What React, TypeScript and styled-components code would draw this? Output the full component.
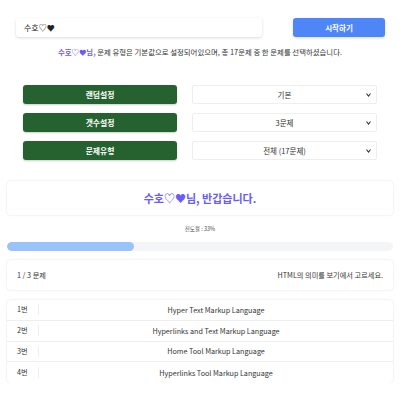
import React from "react";
import styled, { createGlobalStyle } from "styled-components";

const Global = createGlobalStyle`
  html, body { margin: 0; padding: 0; background: #fff; }
  body { font-family: "Noto Sans CJK KR", "Noto Sans", sans-serif; color: #333; }
  * { box-sizing: border-box; }
`;

const Page = styled.div`
  width: 400px;
  padding: 18px 7px 0 7px;
  display: flex;
  flex-direction: column;
`;

const TopBar = styled.div`
  display: flex;
  align-items: center;
  padding: 0 8px 0 9px;
  justify-content: space-between;
`;

const NameInput = styled.div`
  width: 246px;
  height: 19px;
  border-radius: 3px;
  background: #fff;
  box-shadow: 0 1px 3px rgba(0, 0, 0, 0.15);
  font-size: 8px;
  line-height: 19px;
  padding-left: 8px;
  color: #222;
`;

const StartButton = styled.button`
  width: 92px;
  height: 19px;
  border: none;
  border-radius: 3px;
  background: #4e86f7;
  color: #fff;
  font-family: inherit;
  font-size: 7.5px;
  font-weight: 700;
  box-shadow: 0 1px 3px rgba(0, 0, 0, 0.15);
  padding: 0;
`;

const Notice = styled.p`
  margin: 9px 0 0;
  line-height: 11px;
  text-align: center;
  font-size: 7.4px;
  color: #333;
`;

const Highlight = styled.span`
  color: #6a5cf5;
  font-weight: 700;
`;

const Settings = styled.div`
  margin-top: 28px;
  padding: 0 16px;
  display: flex;
  flex-direction: column;
  gap: 9px;
`;

const SettingRow = styled.div`
  display: flex;
  justify-content: space-between;
`;

const SettingLabel = styled.div`
  width: 154px;
  height: 19px;
  border-radius: 3px;
  background: #25622f;
  color: #fff;
  font-size: 7.8px;
  font-weight: 700;
  display: flex;
  align-items: center;
  justify-content: center;
  box-shadow: 0 1px 2px rgba(0, 0, 0, 0.2);
`;

const SelectBox = styled.div`
  width: 185px;
  height: 19px;
  border: 1px solid #eee;
  border-radius: 2px;
  background: #fff;
  font-size: 7.5px;
  display: flex;
  align-items: center;
  justify-content: center;
  position: relative;
  color: #333;
`;

const Chevron = styled.svg`
  position: absolute;
  right: 5px;
  top: 7px;
`;

const Card = styled.div`
  border-radius: 4px;
  background: #fff;
  box-shadow: 0 0 2px rgba(0, 0, 0, 0.15);
`;

const Greeting = styled(Card)`
  margin-top: 21px;
  height: 34px;
  display: flex;
  align-items: center;
  justify-content: center;
  color: #6a5cf5;
  font-size: 11px;
  font-weight: 700;
`;

const ProgressLabel = styled.div`
  margin-top: 10px;
  line-height: 8px;
  text-align: center;
  font-size: 5.5px;
  color: #444;
`;

const Track = styled.div`
  margin-top: 9px;
  height: 9px;
  border-radius: 5px;
  background: #f4f5f6;
  overflow: hidden;
`;

const Fill = styled.div`
  height: 100%;
  border-radius: 5px;
  background: #9ac3fb;
`;

const QuestionCard = styled(Card)`
  margin-top: 9px;
  height: 30px;
  display: flex;
  align-items: center;
  justify-content: space-between;
  padding: 0 10px;
  font-size: 7.2px;
  color: #333;
`;

const OptionList = styled(Card)`
  margin-top: 10px;
  display: flex;
  flex-direction: column;
`;

const OptionRow = styled.div<{ $last?: boolean }>`
  height: 20.75px;
  display: flex;
  align-items: center;
  border-bottom: ${(p) => (p.$last ? "none" : "1px solid #eee")};
  font-size: 7.2px;
  color: #333;
`;

const OptionNum = styled.div`
  width: 32px;
  padding-left: 10px;
  border-right: 1px solid #eee;
  height: 11px;
  line-height: 11px;
`;

const OptionText = styled.div`
  flex: 1;
  text-align: center;
`;

const ChevronIcon = () => (
  <Chevron width="5" height="4" viewBox="0 0 10 8">
    <path d="M1 1 L5 6 L9 1" stroke="#333" strokeWidth="2.2" fill="none" />
  </Chevron>
);

const settings = [
  { label: "랜덤설정", value: "기본" },
  { label: "갯수설정", value: "3문제" },
  { label: "문제유형", value: "전체 (17문제)" },
];

const options = [
  "Hyper Text Markup Language",
  "Hyperlinks and Text Markup Language",
  "Home Tool Markup Language",
  "Hyperlinks Tool Markup Language",
];

export default function App() {
  const progress = 33;
  return (
    <>
      <Global />
      <Page>
        <TopBar>
          <NameInput>수호♡♥</NameInput>
          <StartButton>시작하기</StartButton>
        </TopBar>
        <Notice>
          <Highlight>수호♡♥님,</Highlight> 문제 유형은 기본값으로 설정되어있으며, 총 17문제 중 한 문제를 선택하셨습니다.
        </Notice>
        <Settings>
          {settings.map((s) => (
            <SettingRow key={s.label}>
              <SettingLabel>{s.label}</SettingLabel>
              <SelectBox>
                {s.value}
                <ChevronIcon />
              </SelectBox>
            </SettingRow>
          ))}
        </Settings>
        <Greeting>수호♡♥님, 반갑습니다.</Greeting>
        <ProgressLabel>진도율 : {progress}%</ProgressLabel>
        <Track>
          <Fill style={{ width: `${progress}%` }} />
        </Track>
        <QuestionCard>
          <span>1 / 3 문제</span>
          <span>HTML의 의미를 보기에서 고르세요.</span>
        </QuestionCard>
        <OptionList>
          {options.map((o, i) => (
            <OptionRow key={o} $last={i === options.length - 1}>
              <OptionNum>{i + 1}번</OptionNum>
              <OptionText>{o}</OptionText>
            </OptionRow>
          ))}
        </OptionList>
      </Page>
    </>
  );
}
